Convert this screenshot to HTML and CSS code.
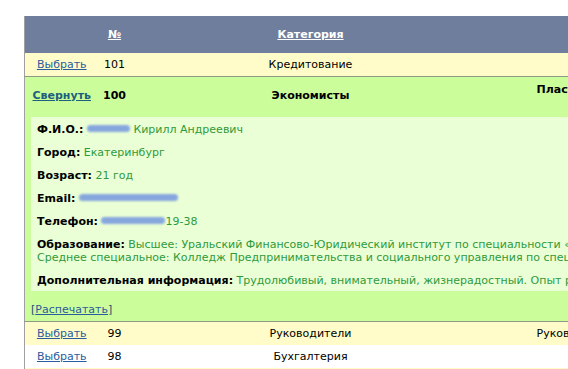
FILE: index.html
```html
<!DOCTYPE html>
<html lang="ru">
<head>
  <meta charset="UTF-8">
  <title>Резюме</title>
  <link rel="stylesheet" href="styles.css">
</head>
<body>
  <div class="page">
    <table class="list">
      <colgroup>
        <col class="c-act">
        <col class="c-num">
        <col class="c-cat">
        <col class="c-extra">
      </colgroup>
      <thead>
        <tr>
          <th></th>
          <th><a href="#">№</a></th>
          <th><a href="#">Категория</a></th>
          <th></th>
        </tr>
      </thead>
      <tbody>
        <tr class="odd">
          <td><a href="#">Выбрать</a></td>
          <td>101</td>
          <td>Кредитование</td>
          <td class="extra"></td>
        </tr>
        <tr class="open head">
          <td><a href="#" class="collapse">Свернуть</a></td>
          <td>100</td>
          <td>Экономисты</td>
          <td class="extra top">Пластиковые карты</td>
        </tr>
        <tr class="open">
          <td colspan="4" class="details">
            <div class="card">
              <p><b>Ф.И.О.:</b> <span class="hide w43"></span> Кирилл Андреевич</p>
              <p><b>Город:</b> Екатеринбург</p>
              <p><b>Возраст:</b> 21 год</p>
              <p><b>Email:</b> <span class="hide w99"></span></p>
              <p><b>Телефон:</b> <span class="hide w64"></span>19-38</p>
              <p><b>Образование:</b> Высшее: Уральский Финансово-Юридический институт по специальности «Финансы и кредит»<br>Среднее специальное: Колледж Предпринимательства и социального управления по специальности «Экономика»</p>
              <p><b>Дополнительная информация:</b> Трудолюбивый, внимательный, жизнерадостный. Опыт работы с клиентами</p>
            </div>
            <div class="print">[<a href="#">Распечатать</a>]</div>
          </td>
        </tr>
        <tr class="odd">
          <td><a href="#">Выбрать</a></td>
          <td>99</td>
          <td>Руководители</td>
          <td class="extra">Руководители</td>
        </tr>
        <tr>
          <td><a href="#">Выбрать</a></td>
          <td>98</td>
          <td>Бухгалтерия</td>
          <td class="extra"></td>
        </tr>
        <tr class="odd">
          <td><a href="#">Выбрать</a></td>
          <td>97</td>
          <td>Продажи</td>
          <td class="extra"></td>
        </tr>
      </tbody>
    </table>
  </div>
</body>
</html>
```

FILE: styles.css
```css
html, body { margin: 0; overflow: hidden; background: #fff; }
body { font-family: "DejaVu Sans", Verdana, sans-serif; font-size: 11px; color: #000; }
.page { padding: 16px 0 0 24px; }

.list { width: 646px; border-collapse: collapse; table-layout: fixed; border-left: 1px solid #a0a0a0; }
.c-act { width: 74px; }
.c-num { width: 32px; }
.c-cat { width: 360px; }
.c-extra { width: 180px; }

.list th { background: #6f7e9d; height: 37px; padding: 0; text-align: center; font-weight: bold; }
.list th a { color: #fff; }
.list td { height: 23px; padding: 0; text-align: center; vertical-align: middle; line-height: 13px; white-space: nowrap; }
.list td.extra { text-align: left; padding-left: 46px; }
.list tr.odd td { background: #fffcc9; }
.list td a { color: #2a5c9e; }

.list tr.open td { background: #ccfd9b; }
.list tr.head td { height: 36px; border-top: 1px solid #8f9a86; font-weight: bold; }
.list tr.head td.top { vertical-align: top; padding-top: 6px; height: 30px; }
.list a.collapse { color: #1d5f7c; }

.list td.details { text-align: left; padding: 4px 0 5px 6px; border-bottom: 1px solid #8f9a86; height: auto; }
.card { background: #eaffd5; padding: 6px 6px 4px; color: #2f9a3c; }
.card p { margin: 0 0 10px; line-height: 13px; }
.card p:last-child { margin-bottom: 0; }
.card b { color: #000; }
.hide { display: inline-block; height: 7px; background: #86a6de; border-radius: 4px; filter: blur(0.8px); vertical-align: 1px; }
.w43 { width: 43px; }
.w99 { width: 99px; }
.w64 { width: 64px; }

.print { margin-top: 12px; color: #1d4f6e; }
.print a { color: #2a5c9e; }
```
